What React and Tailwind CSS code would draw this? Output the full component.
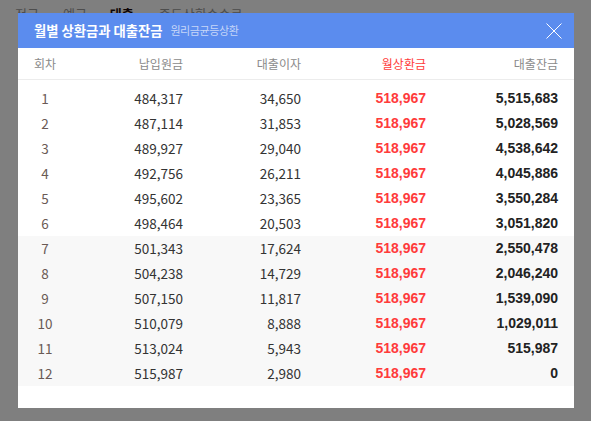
import React from "react";

const rows = [
  [1, "484,317", "34,650", "518,967", "5,515,683"],
  [2, "487,114", "31,853", "518,967", "5,028,569"],
  [3, "489,927", "29,040", "518,967", "4,538,642"],
  [4, "492,756", "26,211", "518,967", "4,045,886"],
  [5, "495,602", "23,365", "518,967", "3,550,284"],
  [6, "498,464", "20,503", "518,967", "3,051,820"],
  [7, "501,343", "17,624", "518,967", "2,550,478"],
  [8, "504,238", "14,729", "518,967", "2,046,240"],
  [9, "507,150", "11,817", "518,967", "1,539,090"],
  [10, "510,079", "8,888", "518,967", "1,029,011"],
  [11, "513,024", "5,943", "518,967", "515,987"],
  [12, "515,987", "2,980", "518,967", "0"],
];

const cjk = { fontFamily: '"Noto Sans CJK KR", "Noto Sans", sans-serif' };
const num = { fontFamily: '"Noto Sans CJK KR", "Liberation Sans", sans-serif' };
const bold = { fontFamily: '"Liberation Sans", Arial, sans-serif' };

const grid = "grid grid-cols-[54px_111px_118px_125px_132px] pr-4";

export default function App() {
  return (
    <div className="relative w-[591px] h-[421px] overflow-hidden bg-white" style={cjk}>
      <div className="flex items-start h-[13px] overflow-hidden pt-[7px] pl-[15px] text-[13px] leading-none text-[#9a9a9a]">
        <span>적금</span>
        <span className="ml-[24px]">예금</span>
        <span className="ml-[23px] font-bold text-[#1a0a0a]">대출</span>
        <span className="ml-[25px]">중도상환수수료</span>
      </div>
      <div className="absolute inset-0 bg-black/50" />
      <div className="absolute left-[18px] top-[13px] w-[556px] h-[395px] bg-white flex flex-col">
        <div className="relative h-[35px] shrink-0 bg-[#5b8cee] flex items-center pl-4">
          <span className="text-white font-bold text-[13.3px] leading-none">월별 상환금과 대출잔금</span>
          <span className="ml-[8px] text-[#c6d6f8] text-[11px] leading-none tracking-[-0.4px]">원리금균등상환</span>
          <svg className="absolute right-[12px] top-[10px]" width="16" height="16" viewBox="0 0 16 16">
            <path d="M0.5 0.5 L15.5 15.5 M15.5 0.5 L0.5 15.5" stroke="white" strokeWidth="1" fill="none" />
          </svg>
        </div>
        <div className={`${grid} h-[32px] items-center border-b border-[#ececec] text-[12px] text-[#8a8a8a]`}>
          <div className="text-center">회차</div>
          <div className="text-right">납입원금</div>
          <div className="text-right">대출이자</div>
          <div className="text-right text-[#ff3b3b]">월상환금</div>
          <div className="text-right">대출잔금</div>
        </div>
        <div className="pt-[6px]">
          {rows.map((r, i) => (
            <div
              key={r[0]}
              className={`${grid} h-[25px] items-center ${i >= 6 ? "bg-[#f8f8f8]" : ""}`}
            >
              <div className="text-center text-[13.5px] text-[#6a5a55]" style={num}>{r[0]}</div>
              <div className="text-right text-[13.5px] text-[#333]" style={num}>{r[1]}</div>
              <div className="text-right text-[13.5px] text-[#333]" style={num}>{r[2]}</div>
              <div className="text-right text-[14px] font-bold text-[#ff3b3b]" style={bold}>{r[3]}</div>
              <div className="text-right text-[14px] font-bold text-[#222]" style={bold}>{r[4]}</div>
            </div>
          ))}
        </div>
      </div>
    </div>
  );
}
